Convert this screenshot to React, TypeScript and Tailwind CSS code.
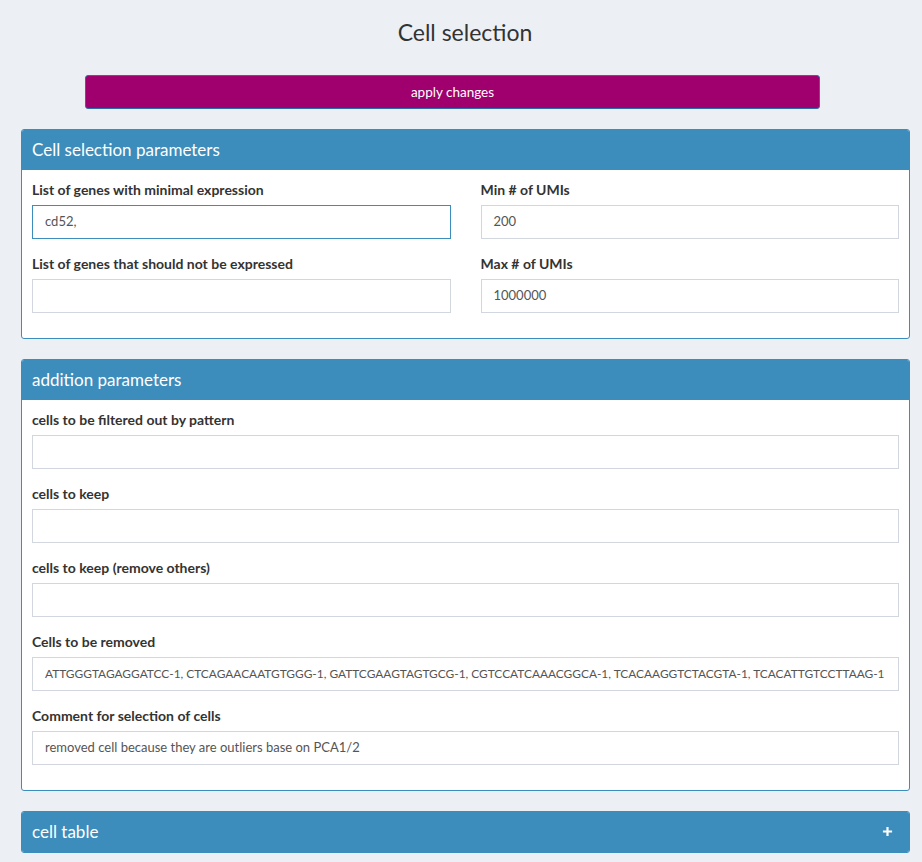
import React from "react";

const font = { fontFamily: '"Source Sans Pro", Lato, "Liberation Sans", sans-serif' };

function Field({ label, value, focused, small }: { label: string; value?: string; focused?: boolean; small?: boolean }) {
  return (
    <div className="flex flex-col">
      <label className="text-[14px] font-bold text-[#333] leading-[20px] mb-[5px]">{label}</label>
      <div
        className={
          "h-[34px] bg-white border flex items-center px-[12px] text-[#555] whitespace-nowrap overflow-hidden " +
          (small ? "text-[11.9px] " : "text-[13px] ") +
          (focused ? "border-[#3c8dbc]" : "border-[#d2d6de]")
        }
      >
        {value}
      </div>
    </div>
  );
}

function BoxHeader({ title, plus }: { title: string; plus?: boolean }) {
  return (
    <div className="h-[40px] bg-[#3c8dbc] flex items-center justify-between px-[10px] pb-[2px] text-white">
      <span className="text-[17px] leading-none">{title}</span>
      {plus && (
        <svg width="11" height="11" viewBox="0 0 12 12" className="mr-[6px]">
          <path d="M6 1v10M1 6h10" stroke="white" strokeWidth="2.4" />
        </svg>
      )}
    </div>
  );
}

export default function App() {
  return (
    <div className="min-h-[862px] bg-[#ecf0f5] text-[#333]" style={font}>
      <div className="pt-[17px] flex flex-col">
        <h1 className="text-[23px] text-center leading-[30px] pl-[8px] text-[#333]">Cell selection</h1>
        <div className="mt-[28px] px-[85px] pr-[102px]">
          <div className="h-[34px] bg-[#a0006e] border border-[#2e6da4] rounded-[3px] flex items-center justify-center text-white text-[13.5px]">
            apply changes
          </div>
        </div>
        <div className="mt-[20px] ml-[21px] mr-[12px] flex flex-col gap-[20px]">
          <div className="rounded-[3px] border border-[#3c8dbc] bg-white overflow-hidden">
            <BoxHeader title="Cell selection parameters" />
            <div className="px-[10px] pt-[10px] pb-[25px] grid grid-cols-2 gap-x-[30px] gap-y-[15px]">
              <Field label="List of genes with minimal expression" value="cd52," focused />
              <Field label="Min # of UMIs" value="200" />
              <Field label="List of genes that should not be expressed" />
              <Field label="Max # of UMIs" value="1000000" />
            </div>
          </div>
          <div className="rounded-[3px] border border-[#3c8dbc] bg-white overflow-hidden">
            <BoxHeader title="addition parameters" />
            <div className="px-[10px] pt-[10px] pb-[25px] flex flex-col gap-[15px]">
              <Field label="cells to be filtered out by pattern" />
              <Field label="cells to keep" />
              <Field label="cells to keep (remove others)" />
              <Field
                label="Cells to be removed"
                small
                value="ATTGGGTAGAGGATCC-1, CTCAGAACAATGTGGG-1, GATTCGAAGTAGTGCG-1, CGTCCATCAAACGGCA-1, TCACAAGGTCTACGTA-1, TCACATTGTCCTTAAG-1"
              />
              <Field label="Comment for selection of cells" value="removed cell because they are outliers base on PCA1/2" />
            </div>
          </div>
          <div className="rounded-[3px] border border-[#3c8dbc] overflow-hidden">
            <BoxHeader title="cell table" plus />
          </div>
        </div>
      </div>
    </div>
  );
}
